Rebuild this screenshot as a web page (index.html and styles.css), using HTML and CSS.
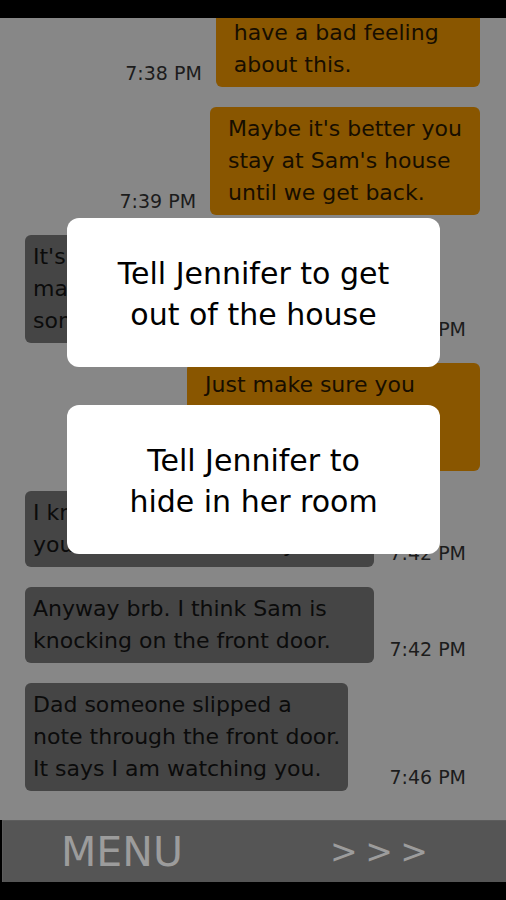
FILE: index.html
```html
<!DOCTYPE html>
<html lang="en">
<head>
    <meta charset="UTF-8">
    <meta name="viewport" content="width=device-width, initial-scale=1.0">
    <title>Messages</title>
    <link rel="stylesheet" href="styles.css">
</head>
<body>
    <div id="phone">
        <div class="bar-top"></div>

        <div class="screen">
            <div class="chat">
                <div class="msg out">
                    <span class="time">7:38 PM</span>
                    <div class="bubble">Be very careful Jen. I<br>have a bad feeling<br>about this.</div>
                </div>
                <div class="msg out">
                    <span class="time">7:39 PM</span>
                    <div class="bubble">Maybe it's better you<br>stay at Sam's house<br>until we get back.</div>
                </div>
                <div class="msg in">
                    <div class="bubble">It's fine dad. I think you're<br>making a big deal out of<br>something that is nothing.</div>
                    <span class="time">7:40 PM</span>
                </div>
                <div class="msg out">
                    <span class="time">7:41 PM</span>
                    <div class="bubble">Just make sure you lock all the doors tonight.</div>
                </div>
                <div class="msg in">
                    <div class="bubble full">I know dad. I'll be careful.<br>you don't have to worry.</div>
                    <span class="time">7:42 PM</span>
                </div>
                <div class="msg in">
                    <div class="bubble">Anyway brb. I think Sam is knocking on the front door.</div>
                    <span class="time">7:42 PM</span>
                </div>
                <div class="msg in">
                    <div class="bubble">Dad someone slipped a<br>note through the front door.<br>It says I am watching you.</div>
                    <span class="time">7:46 PM</span>
                </div>
            </div>

            <!-- choice popup sits on top of the chat -->
            <div class="choices">
                <div class="choice">Tell Jennifer to get<br>out of the house</div>
                <div class="choice">Tell Jennifer to<br>hide in her room</div>
            </div>
        </div>

        <div class="menu-bar">
            <span class="menu">MENU</span>
            <span class="next">&gt; &gt; &gt;</span>
        </div>

        <div class="bar-bottom"></div>
    </div>
</body>
</html>
```

FILE: styles.css
```css
body {
    margin: 0;
    background-color: #000;
    font-family: 'DejaVu Sans', 'Liberation Sans', sans-serif;
}

#phone {
    width: 506px;
    height: 900px;
    display: flex;
    flex-direction: column;
}

.bar-top, .bar-bottom {
    height: 18px;
    background-color: #000;
    flex-shrink: 0;
}

.screen {
    flex: 1;
    position: relative;
    overflow: hidden;
    background-color: #878787;
}

.chat {
    height: 100%;
    display: flex;
    flex-direction: column;
    justify-content: flex-end;
    gap: 20px;
    padding-bottom: 29px;
    box-sizing: border-box;
}

.msg {
    display: flex;
    align-items: flex-end;
    flex-shrink: 0;
}

.msg.in {
    justify-content: space-between;
    padding: 0 40px 0 25px;
}

.msg.out {
    justify-content: flex-end;
    gap: 14px;
    padding-right: 26px;
}

.bubble {
    font-size: 22px;
    line-height: 32px;
    border-radius: 6px;
    box-sizing: border-box;
}

.msg.in .bubble {
    background-color: #454545;
    color: #0b0b0b;
    padding: 6px 8px;
    max-width: 349px;
}

.msg.in .bubble.full {
    width: 349px;
}

.msg.out .bubble {
    background-color: #895600;
    color: #170e00;
    padding: 6px 18px;
    max-width: 293px;
}

.time {
    font-size: 19px;
    line-height: 22px;
    margin-bottom: 3px;
    color: #1c1c1c;
    white-space: nowrap;
}

.choices {
    position: absolute;
    top: 200px;
    left: 67px;
    width: 373px;
    display: flex;
    flex-direction: column;
    gap: 38px;
}

.choice {
    height: 149px;
    background-color: #fff;
    border-radius: 12px;
    display: flex;
    align-items: center;
    justify-content: center;
    text-align: center;
    font-size: 30px;
    line-height: 41px;
    color: #000;
    padding-top: 2px;
    box-sizing: border-box;
}

.menu-bar {
    height: 62px;
    flex-shrink: 0;
    margin-left: 2px;
    background-color: #555;
    border-top: 1px solid #5d5d5d;
    border-left: 1px solid #5d5d5d;
    box-sizing: border-box;
    display: flex;
    align-items: center;
    justify-content: space-between;
    padding: 0 78px 0 58px;
}

.menu {
    font-size: 41px;
    color: #9c9c9c;
}

.next {
    font-size: 33px;
    word-spacing: -3px;
    color: #9c9c9c;
}
```
